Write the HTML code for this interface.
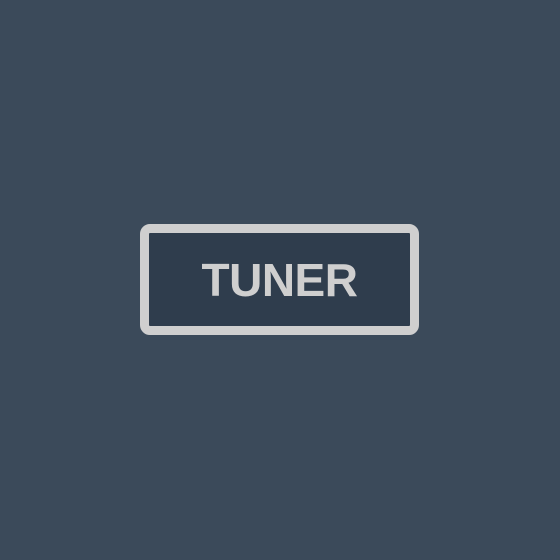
<!DOCTYPE html>
<html><head><style>
html,body{margin:0;padding:0;width:560px;height:560px;background:#3b4a5a;overflow:hidden}
.b{position:absolute;left:140px;top:224px;width:261px;height:93px;border:9px solid #cfcfcf;border-radius:10px;background:#2f3d4d;
display:flex;align-items:center;justify-content:center;font-family:"Liberation Sans",sans-serif;font-weight:bold;font-size:46px;color:#cfcfcf;letter-spacing:-0.5px}
</style></head><body><div class="b">TUNER</div></body></html>
